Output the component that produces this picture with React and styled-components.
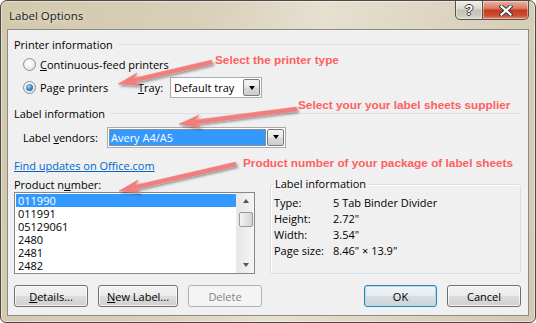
import React from 'react';
import styled, { createGlobalStyle } from 'styled-components';

const GlobalStyle = createGlobalStyle`
    html, body {
        margin: 0;
        padding: 0;
        background: #ffffff;
    }
    body {
        font-family: "Open Sans", "Liberation Sans", sans-serif;
        font-size: 11px;
        color: #000;
    }
`;

const Window = styled.div`
    position: relative;
    box-sizing: border-box;
    width: 536px;
    height: 323px;
    border: 1px solid #4a4944;
    border-radius: 7px 7px 6px 6px;
    background: linear-gradient(100deg, #d2c8ac 0%, #d9d0ba 35%, #e6e0cf 55%, #ddd5c1 75%, #d3c9b0 100%);
    box-shadow: inset 0 0 0 1px rgba(255, 255, 255, 0.45);
    display: flex;
    flex-direction: column;
    padding: 0 6px 6px 6px;
    overflow: hidden;
`;

const TitleBar = styled.div`
    height: 28px;
    display: flex;
    align-items: flex-start;
    padding-left: 2px;
`;

const Title = styled.div`
    margin-top: 7px;
    font-size: 11.5px;
    line-height: 16px;
    color: #1a1a1a;
    text-shadow: 0 0 6px rgba(255, 255, 255, 0.9);
`;

const CaptionButtons = styled.div`
    margin-left: auto;
    display: flex;
    margin-top: -1px;
`;

const CaptionButton = styled.div`
    box-sizing: border-box;
    height: 20px;
    width: ${p => (p.$close ? '46px' : '28px')};
    border: 1px solid #55534d;
    border-left-width: ${p => (p.$close ? '0' : '1px')};
    border-radius: ${p => (p.$close ? '0 0 5px 0' : '0 0 0 5px')};
    background: ${p => (p.$close
        ? 'linear-gradient(#eab0a2 0%, #da7d66 40%, #c63b20 52%, #cf4b2e 80%, #e08a72 100%)'
        : 'linear-gradient(#f1eee8 0%, #dedad0 40%, #c6c1b5 52%, #cfcabf 80%, #dcd8ce 100%)')};
    box-shadow: inset 0 0 0 1px rgba(255, 255, 255, 0.4);
    display: flex;
    align-items: center;
    justify-content: center;
`;

const HelpGlyph = styled.span`
    font-family: "Liberation Sans", sans-serif;
    font-weight: bold;
    font-size: 14px;
    line-height: 14px;
    color: #fff;
    text-shadow: 1px 0 0 #3a3a3a, -1px 0 0 #3a3a3a, 0 1px 0 #3a3a3a, 0 -1px 0 #3a3a3a;
`;

const Client = styled.div`
    flex: 1;
    display: flex;
    flex-direction: column;
    border: 1px solid #8a8a86;
    background: #f0f0f0;
    padding: 6px 7px 0 6px;
`;

const SectionHeader = styled.div`
    display: flex;
    align-items: center;
    height: 16px;
    margin-top: ${p => p.$top || 0}px;
    &::after {
        content: '';
        flex: 1;
        height: 1px;
        background: #dbe0e6;
        margin-left: 6px;
    }
`;

const Row = styled.div`
    display: flex;
    align-items: center;
    height: ${p => p.$h}px;
    margin-top: ${p => p.$top}px;
    padding-left: ${p => p.$indent || 0}px;
`;

const RadioOption = styled.label`
    display: flex;
    align-items: center;
    gap: 4px;
    width: ${p => (p.$w ? `${p.$w}px` : 'auto')};
`;

const RadioDot = styled.span`
    box-sizing: border-box;
    width: 13px;
    height: 13px;
    border-radius: 50%;
    border: 1px solid #8c8f92;
    background: radial-gradient(circle at 45% 40%, #ffffff 0%, #f2f2f2 45%, #d2d4d6 100%);
    display: flex;
    align-items: center;
    justify-content: center;
    &::after {
        content: '';
        display: ${p => (p.$checked ? 'block' : 'none')};
        width: 7px;
        height: 7px;
        border-radius: 50%;
        background: radial-gradient(circle at 40% 35%, #9bd8fb 0%, #3a8ad0 50%, #0d3f7a 100%);
    }
`;

const FieldLabel = styled.span`
    width: ${p => p.$w}px;
    flex-shrink: 0;
`;

const Select = styled.div`
    box-sizing: border-box;
    width: ${p => p.$w}px;
    height: 21px;
    border: 1px solid #a9abae;
    background: #fff;
    display: flex;
    align-items: stretch;
    padding: 1px;
`;

const SelectValue = styled.div`
    flex: 1;
    display: flex;
    align-items: center;
    padding-left: 2px;
    margin-right: 1px;
    color: ${p => (p.$focused ? '#fff' : '#000')};
    background: ${p => (p.$focused ? '#3399ff' : 'transparent')};
    outline: ${p => (p.$focused ? '1px dotted #c98a4a' : 'none')};
    outline-offset: -1px;
`;

const DropButton = styled.div`
    box-sizing: border-box;
    width: 17px;
    border: 1px solid #7a7a7a;
    border-radius: 2px;
    background: linear-gradient(#f4f4f4 0%, #e9e9e9 48%, #d9d9d9 52%, #cdcdcd 100%);
    display: flex;
    align-items: center;
    justify-content: center;
    &::after {
        content: '';
        border-left: 3.5px solid transparent;
        border-right: 3.5px solid transparent;
        border-top: 4px solid #000;
    }
`;

const Link = styled.a`
    color: #0066cc;
    text-decoration: underline;
    cursor: pointer;
`;

const Body = styled.div`
    display: flex;
    gap: 15px;
    height: 98px;
    margin-top: 3px;
`;

const LeftColumn = styled.div`
    width: 241px;
    display: flex;
    flex-direction: column;
`;

const ListCaption = styled.div`
    height: 14px;
    line-height: 14px;
    margin-top: 2px;
`;

const ListBox = styled.div`
    box-sizing: border-box;
    height: 82px;
    border: 1px solid #828790;
    background: #fff;
    display: flex;
    padding: 1px 0 0 1px;
`;

const Items = styled.div`
    flex: 1;
    display: flex;
    flex-direction: column;
`;

const Item = styled.div`
    height: 13px;
    line-height: 13px;
    padding-left: 2px;
    overflow: hidden;
    color: ${p => (p.$selected ? '#fff' : '#000')};
    background: ${p => (p.$selected ? '#3399ff' : 'transparent')};
`;

const ScrollBar = styled.div`
    width: 17px;
    margin-top: -1px;
    background: linear-gradient(90deg, #e6e6e6, #f5f5f5);
    border-left: 1px solid #ececec;
    display: flex;
    flex-direction: column;
    align-items: center;
`;

const ScrollArrow = styled.div`
    height: 16px;
    display: flex;
    align-items: center;
    justify-content: center;
    &::after {
        content: '';
        border-left: 3.5px solid transparent;
        border-right: 3.5px solid transparent;
        ${p => (p.$down ? 'border-top: 4px solid #555;' : 'border-bottom: 4px solid #555;')}
    }
`;

const ScrollTrack = styled.div`
    flex: 1;
    width: 100%;
    display: flex;
    justify-content: center;
`;

const Thumb = styled.div`
    box-sizing: border-box;
    margin-top: 3px;
    width: 14px;
    height: 15px;
    border: 1px solid #9a9a9a;
    border-radius: 2px;
    background: linear-gradient(90deg, #f3f3f3 0%, #e4e4e4 50%, #d4d4d4 100%);
`;

const InfoGroup = styled.fieldset`
    flex: 1;
    margin: 0;
    padding: 3px 3px 0 3px;
    min-width: 0;
    border: 1px solid #d5dfe5;
    border-radius: 3px;
    box-shadow: inset 1px 1px 0 #fff;
`;

const Legend = styled.legend`
    padding: 0 1px;
    line-height: 16px;
`;

const InfoRow = styled.div`
    display: flex;
    height: 16px;
    line-height: 16px;
`;

const InfoKey = styled.span`
    width: 59px;
`;

const ButtonRow = styled.div`
    display: flex;
    gap: 10px;
    margin-top: 11px;
`;

const Spacer = styled.div`
    flex: 1;
`;

const Button = styled.button`
    box-sizing: border-box;
    width: ${p => p.$w}px;
    height: 22px;
    padding: 0;
    font: inherit;
    border-radius: 3px;
    border: 1px solid ${p => (p.$primary ? '#3c7fb1' : p.disabled ? '#adb2b5' : '#707070')};
    color: ${p => (p.disabled ? '#838383' : '#000')};
    background: ${p => (p.disabled
        ? '#f4f4f4'
        : p.$primary
            ? 'linear-gradient(#f0f4f7 0%, #e7ecf0 48%, #d7dde2 52%, #cdd4da 100%)'
            : 'linear-gradient(#f2f2f2 0%, #ebebeb 48%, #dddddd 52%, #cfcfcf 100%)')};
    box-shadow: ${p => (p.$primary ? 'inset 0 0 0 1px #a9dcf5' : p.disabled ? 'none' : 'inset 0 0 0 1px rgba(255,255,255,0.7)')};
`;

const Overlay = styled.div`
    position: absolute;
    inset: 0;
    pointer-events: none;
`;

const Callout = styled.div`
    position: absolute;
    left: ${p => p.$x}px;
    top: ${p => p.$y}px;
    font-family: "Liberation Sans", Arial, sans-serif;
    font-weight: bold;
    font-size: 11.8px;
    line-height: 14px;
    color: #ff5f5f;
    white-space: nowrap;
`;

const arrowPoints = (x1, y1, x2, y2) => {
    const shaft = 2;
    const headLen = 21;
    const headHalf = 6.5;
    const dx = x2 - x1;
    const dy = y2 - y1;
    const len = Math.hypot(dx, dy);
    const ux = dx / len;
    const uy = dy / len;
    const nx = -uy;
    const ny = ux;
    const bx = x2 - ux * headLen;
    const by = y2 - uy * headLen;
    const nbx = x2 - ux * (headLen - 4);
    const nby = y2 - uy * (headLen - 4);
    const pts = [
        [x1 + nx * shaft, y1 + ny * shaft],
        [nbx + nx * shaft, nby + ny * shaft],
        [bx + nx * headHalf, by + ny * headHalf],
        [x2, y2],
        [bx - nx * headHalf, by - ny * headHalf],
        [nbx - nx * shaft, nby - ny * shaft],
        [x1 - nx * shaft, y1 - ny * shaft],
    ];
    return pts.map(p => `${p[0].toFixed(1)},${p[1].toFixed(1)}`).join(' ');
};

const arrows = [
    [211, 61, 117, 83],
    [296, 108, 178, 123],
    [235, 163, 118, 190],
];

const products = ['011990', '011991', '05129061', '2480', '2481', '2482'];

const info = [
    ['Type:', '5 Tab Binder Divider'],
    ['Height:', '2.72"'],
    ['Width:', '3.54"'],
    ['Page size:', '8.46" \u00d7 13.9"'],
];

export default function App() {
    return (
        <>
            <GlobalStyle />
            <Window>
                <TitleBar>
                    <Title>Label Options</Title>
                    <CaptionButtons>
                        <CaptionButton><HelpGlyph>?</HelpGlyph></CaptionButton>
                        <CaptionButton $close>
                            <svg width="14" height="11" viewBox="0 0 14 11">
                                <path d="M2.5 1.5 L11.5 9.5 M11.5 1.5 L2.5 9.5" stroke="#3b3b3b" strokeWidth="4.2" strokeLinecap="square" />
                                <path d="M2.5 1.5 L11.5 9.5 M11.5 1.5 L2.5 9.5" stroke="#ffffff" strokeWidth="2.2" strokeLinecap="square" />
                            </svg>
                        </CaptionButton>
                    </CaptionButtons>
                </TitleBar>
                <Client>
                    <SectionHeader>Printer information</SectionHeader>
                    <Row $h={14} $top={5} $indent={9}>
                        <RadioOption>
                            <RadioDot />
                            <span><u>C</u>ontinuous-feed printers</span>
                        </RadioOption>
                    </Row>
                    <Row $h={21} $top={6} $indent={9}>
                        <RadioOption $w={115}>
                            <RadioDot $checked />
                            <span>Pa<u>g</u>e printers</span>
                        </RadioOption>
                        <FieldLabel $w={32}><u>T</u>ray:</FieldLabel>
                        <Select $w={92}>
                            <SelectValue>Default tray</SelectValue>
                            <DropButton />
                        </Select>
                    </Row>
                    <SectionHeader $top={7}>Label information</SectionHeader>
                    <Row $h={22} $top={5} $indent={9}>
                        <FieldLabel $w={84}>Label <u>v</u>endors:</FieldLabel>
                        <Select $w={179}>
                            <SelectValue $focused>Avery A4/A5</SelectValue>
                            <DropButton />
                        </Select>
                    </Row>
                    <Row $h={16} $top={9}>
                        <Link>Find updates on Office.com</Link>
                    </Row>
                    <Body>
                        <LeftColumn>
                            <ListCaption>Product n<u>u</u>mber:</ListCaption>
                            <ListBox>
                                <Items>
                                    {products.map((p, i) => (
                                        <Item key={p} $selected={i === 0}>{p}</Item>
                                    ))}
                                </Items>
                                <ScrollBar>
                                    <ScrollArrow />
                                    <ScrollTrack><Thumb /></ScrollTrack>
                                    <ScrollArrow $down />
                                </ScrollBar>
                            </ListBox>
                        </LeftColumn>
                        <InfoGroup>
                            <Legend>Label information</Legend>
                            {info.map(([k, v]) => (
                                <InfoRow key={k}>
                                    <InfoKey>{k}</InfoKey>
                                    <span>{v}</span>
                                </InfoRow>
                            ))}
                        </InfoGroup>
                    </Body>
                    <ButtonRow>
                        <Button $w={74}><u>D</u>etails...</Button>
                        <Button $w={80}><u>N</u>ew Label...</Button>
                        <Button $w={74} disabled>Delete</Button>
                        <Spacer />
                        <Button $w={73} $primary>OK</Button>
                        <Button $w={74}>Cancel</Button>
                    </ButtonRow>
                </Client>
                <Overlay>
                    <svg width="536" height="323" viewBox="0 0 536 323">
                        <defs>
                            <filter id="arrowShadow" x="-20%" y="-50%" width="140%" height="200%">
                                <feDropShadow dx="1.5" dy="2" stdDeviation="1.3" floodColor="#000" floodOpacity="0.35" />
                            </filter>
                        </defs>
                        {arrows.map((a, i) => (
                            <polygon
                                key={i}
                                points={arrowPoints(...a)}
                                fill="#f17d7d"
                                stroke="#f17d7d"
                                strokeWidth="0.6"
                                strokeLinejoin="round"
                                filter="url(#arrowShadow)"
                            />
                        ))}
                    </svg>
                    <Callout $x={214} $y={52}>Select the printer type</Callout>
                    <Callout $x={297} $y={97}>Select your your label sheets supplier</Callout>
                    <Callout $x={242} $y={155}>Product number of your package of label sheets</Callout>
                </Overlay>
            </Window>
        </>
    );
}
